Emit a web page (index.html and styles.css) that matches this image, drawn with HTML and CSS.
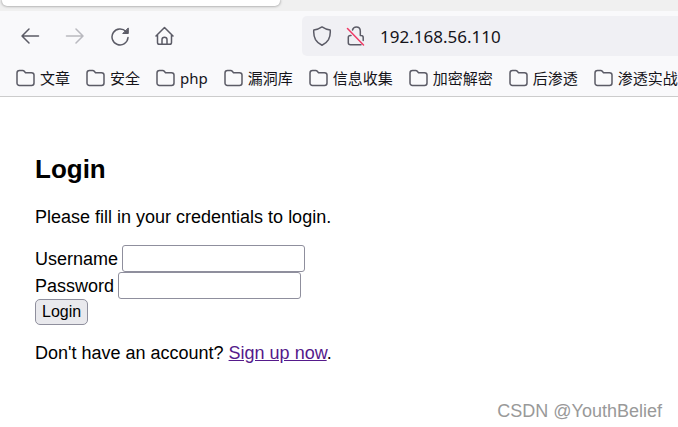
FILE: index.html
```html
<!DOCTYPE html>
<html lang="zh-CN">
<head>
  <meta charset="UTF-8">
  <meta name="viewport" content="width=device-width, initial-scale=1.0">
  <title>Login</title>
  <link rel="stylesheet" href="styles.css">
</head>
<body>
  <!-- Shared folder icon for the bookmarks -->
  <svg class="sprite" aria-hidden="true">
    <symbol id="folder" viewBox="0 0 19 18">
      <path d="M3.500 1.500h3.200c.7 0 1.200.2 1.600.7l1.200 1.500h6c1.400 0 2.500 1 2.500 2.400v7.900c0 1.400-1 2.500-2.500 2.500h-12A2.400 2.400 0 0 1 1 14V4c0-1.400 1.100-2.500 2.500-2.500z"/>
    </symbol>
  </svg>

  <header class="browser">
    <div class="tab-strip">
      <div class="tab"></div>
    </div>

    <div class="toolbar">
      <nav class="nav-buttons">
        <button type="button" aria-label="Back">
          <svg viewBox="0 0 20 20"><path d="M18.500 10H2.500M9 3L2 10l7 7"/></svg>
        </button>
        <button type="button" aria-label="Forward" disabled>
          <svg viewBox="0 0 20 20"><path d="M1.500 10h16M11 3l7 7-7 7"/></svg>
        </button>
        <button type="button" aria-label="Reload">
          <svg viewBox="0 0 20 20"><path d="M16 5.600A8 8 0 1 0 18 11.500"/><path class="solid" d="M18.300 2.300v5.200h-5.200z"/></svg>
        </button>
        <button type="button" aria-label="Home">
          <svg viewBox="0 0 20 20"><path d="M1 10L9.500 1.500 18 10M2.500 9v7.500c0 1.200.7 1.800 1.800 1.800h10.400c1.100 0 1.800-.6 1.800-1.800V9M7 18v-4.500c0-1.400 1-2.300 2.500-2.300s2.500.9 2.500 2.300V18"/></svg>
        </button>
      </nav>
      <div class="url-bar">
        <svg class="url-icon" viewBox="0 0 20 20"><path d="M10 .9c2.500 1.700 5.200 2.700 8.200 3.100.3 3.200-.1 6.500-1.700 9.600-1.500 2.600-3.700 4.400-6.500 5.700-2.800-1.300-5-3.100-6.500-5.700C1.900 10.500 1.500 7.200 1.800 4 4.800 3.600 7.500 2.600 10 .9z"/></svg>
        <svg class="url-icon" viewBox="0 0 20 20"><path d="M6.500 4C7 2.200 8.300 1 10.300 1c2.400 0 4 1.700 4 4.200v4.200H15c1.500 0 2.200.7 2.200 2v3.100M5 9.400H4.500c-1.500 0-2.200.7-2.200 2v5.400c0 1.300.7 2 2.200 2H15"/><path class="slash" d="M1.500 2.500l16 16.500"/></svg>
        <input type="text" aria-label="Address" value="192.168.56.110">
      </div>
    </div>

    <nav class="bookmarks">
      <a href="#"><svg><use href="#folder"/></svg>文章</a>
      <a href="#"><svg><use href="#folder"/></svg>安全</a>
      <a href="#"><svg><use href="#folder"/></svg>php</a>
      <a href="#"><svg><use href="#folder"/></svg>漏洞库</a>
      <a href="#"><svg><use href="#folder"/></svg>信息收集</a>
      <a href="#"><svg><use href="#folder"/></svg>加密解密</a>
      <a href="#"><svg><use href="#folder"/></svg>后渗透</a>
      <a href="#"><svg><use href="#folder"/></svg>渗透实战</a>
    </nav>
  </header>

  <main class="wrapper">
    <h2>Login</h2>
    <p>Please fill in your credentials to login.</p>
    <form>
      <div class="form-group">
        <label for="username">Username</label>
        <input type="text" id="username" name="username">
      </div>
      <div class="form-group">
        <label for="password">Password</label>
        <input type="password" id="password" name="password">
      </div>
      <div class="form-group">
        <button type="submit">Login</button>
      </div>
      <p>Don't have an account? <a href="#">Sign up now</a>.</p>
    </form>
  </main>

  <div class="watermark">CSDN @YouthBelief</div>
</body>
</html>
```

FILE: styles.css
```css
* {
  box-sizing: border-box;
}

body {
  position: relative;
  min-height: 100vh;
  margin: 0;
  overflow-x: hidden;
  background-color: #fff;
  color: #000;
  font-family: "Liberation Sans", Arial, sans-serif;
  font-size: 18px;
  line-height: 22px;
}

svg {
  flex: none;
  fill: none;
  stroke: #5b5b66;
  stroke-width: 1.5;
  stroke-linecap: round;
  stroke-linejoin: round;
}

.sprite {
  display: none;
}

/* Browser chrome */
.browser {
  background-color: #f9f9fb;
  border-bottom: 1px solid #ccc;
  color: #15141a;
  font-family: "Noto Sans", "Noto Sans CJK SC", sans-serif;
}

.tab-strip {
  height: 11px;
  padding-left: 2px;
  overflow: hidden;
  background-color: #f0f0f0;
}

.tab {
  width: 278px;
  height: 6px;
  border-radius: 0 0 5px 5px;
  background-color: #fff;
  box-shadow: 0 0 3px rgba(0, 0, 0, 0.5);
}

.toolbar {
  display: flex;
  align-items: center;
  padding: 5px 0 5px 20px;
}

.nav-buttons {
  display: flex;
  flex: none;
  gap: 25px;
  width: 282px;
}

.nav-buttons button {
  display: flex;
  padding: 0;
  border: 0;
  background: none;
}

.nav-buttons button:disabled {
  opacity: 0.4;
}

.nav-buttons svg,
.url-icon {
  width: 20px;
  height: 20px;
}

.nav-buttons .solid {
  fill: #5b5b66;
  stroke-width: 1;
}

.url-bar {
  display: flex;
  flex: 1;
  align-items: center;
  gap: 14px;
  min-width: 0;
  height: 40px;
  padding-left: 10px;
  border-radius: 5px 0 0 5px;
  background-color: #f0f0f4;
}

.url-bar .slash {
  stroke: #f03a66;
}

.url-bar input {
  flex: 1;
  min-width: 0;
  padding: 0;
  border: 0;
  outline: 0;
  background: none;
  color: #15141a;
  font: 17px "Noto Sans", sans-serif;
}

.bookmarks {
  display: flex;
  gap: 16px;
  height: 35px;
  padding: 0 0 1px 16px;
  overflow: hidden;
}

.bookmarks a {
  display: flex;
  flex: none;
  align-items: center;
  gap: 5px;
  color: #15141a;
  font-size: 15px;
  text-decoration: none;
}

.bookmarks svg {
  width: 19px;
  height: 18px;
}

/* Login page */
.wrapper {
  padding: 57px 35px 45px;
}

h2 {
  margin: 0 0 22px;
  font-size: 26px;
  line-height: 30px;
}

p {
  margin: 17px 0;
}

.form-group {
  display: flex;
  align-items: center;
  gap: 4px;
}

.form-group input {
  width: 183px;
  height: 27px;
  padding: 1px 2px;
  border: 1px solid #8f8f9d;
  border-radius: 3px;
  background-color: #fff;
  font: inherit;
}

.form-group button {
  height: 26px;
  padding: 0 6px;
  border: 1px solid #8f8f9d;
  border-radius: 5px;
  background-color: #e9e9ed;
  color: #000;
  font: 16px "Liberation Sans", Arial, sans-serif;
}

.wrapper a {
  color: #551a8b;
}

.watermark {
  position: absolute;
  right: 16px;
  bottom: 5px;
  color: #999;
  font-size: 18px;
}
```
